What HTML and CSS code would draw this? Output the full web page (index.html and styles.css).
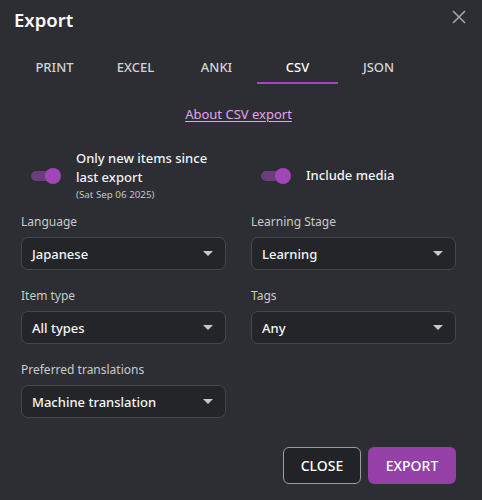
FILE: index.html
```html
<!DOCTYPE html>
<html>
<head>
<meta charset="utf-8">
<link rel="stylesheet" href="styles.css">
</head>
<body>
<div class="dialog">
  <div class="header">
    <h1 class="title">Export</h1>
    <button class="close-x" aria-label="Close">
      <svg width="14" height="14" viewBox="0 0 14 14"><path d="M1 1L13 13M13 1L1 13" stroke="#a3a4a7" stroke-width="1.6" fill="none"/></svg>
    </button>
  </div>
  <div class="tabs">
    <div class="tab">PRINT</div>
    <div class="tab">EXCEL</div>
    <div class="tab">ANKI</div>
    <div class="tab active">CSV</div>
    <div class="tab">JSON</div>
  </div>
  <div class="content">
    <div class="link-row"><a class="link" href="#">About CSV export</a></div>
    <div class="toggles">
      <div class="toggle-item">
        <span class="switch"><span class="track"></span><span class="knob"></span></span>
        <div class="toggle-label">
          <div class="toggle-text">Only new items since<br>last export</div>
          <div class="toggle-sub">(Sat Sep 06 2025)</div>
        </div>
      </div>
      <div class="toggle-item">
        <span class="switch"><span class="track"></span><span class="knob"></span></span>
        <div class="toggle-label">
          <div class="toggle-text">Include media</div>
        </div>
      </div>
    </div>
    <div class="grid">
      <div class="field">
        <div class="label">Language</div>
        <div class="select"><span>Japanese</span><span class="arrow"></span></div>
      </div>
      <div class="field">
        <div class="label">Learning Stage</div>
        <div class="select"><span>Learning</span><span class="arrow"></span></div>
      </div>
      <div class="field">
        <div class="label">Item type</div>
        <div class="select"><span>All types</span><span class="arrow"></span></div>
      </div>
      <div class="field">
        <div class="label">Tags</div>
        <div class="select"><span>Any</span><span class="arrow"></span></div>
      </div>
      <div class="field">
        <div class="label">Preferred translations</div>
        <div class="select"><span>Machine translation</span><span class="arrow"></span></div>
      </div>
    </div>
    <div class="actions">
      <button class="btn btn-outline">CLOSE</button>
      <button class="btn btn-primary">EXPORT</button>
    </div>
  </div>
</div>
</body>
</html>
```

FILE: styles.css
```css
* { box-sizing: border-box; }
html, body {
  margin: 0;
  padding: 0;
  background: #2c2e33;
}
body {
  font-family: "Noto Sans", "Open Sans", sans-serif;
  color: #ececec;
  width: 482px;
  height: 500px;
  overflow: hidden;
}
.dialog {
  width: 482px;
  height: 500px;
  background: #2c2e33;
}
.header {
  display: flex;
  justify-content: space-between;
  align-items: flex-start;
  padding: 6px 16px 0 14px;
}
.title {
  margin: 0;
  font-size: 18.5px;
  line-height: 28px;
  font-weight: 600;
  color: #ffffff;
}
.close-x {
  background: none;
  border: none;
  padding: 0;
  margin-top: 4px;
  width: 14px;
  height: 14px;
  display: block;
}
.close-x svg { display: block; }
.tabs {
  display: flex;
  padding-left: 14px;
  margin-top: 14px;
}
.tab {
  width: 81px;
  height: 36px;
  display: flex;
  align-items: center;
  justify-content: center;
  font-size: 13px;
  font-weight: 500;
  color: #d2d3d6;
  border-bottom: 2px solid transparent;
  padding-top: 4px;
}
.tab.active {
  color: #ffffff;
  border-bottom-color: #a346b8;
}
.content {
  padding: 0 26px 0 21px;
}
.link-row {
  text-align: center;
  margin-top: 19px;
  line-height: 20px;
}
.link {
  font-size: 13px;
  color: #e4a3f2;
  text-decoration: underline;
  text-underline-offset: 2px;
}
.toggles {
  display: grid;
  grid-template-columns: 230px 1fr;
  margin-top: 25px;
}
.toggle-item {
  display: flex;
  align-items: center;
  padding-left: 10px;
}
.switch {
  position: relative;
  width: 30px;
  height: 16px;
  flex: none;
  margin-right: 15px;
}
.track {
  position: absolute;
  left: 0;
  top: 3px;
  width: 26px;
  height: 10px;
  border-radius: 5px;
  background: #6b3d7a;
}
.knob {
  position: absolute;
  right: 0;
  top: 0;
  width: 16px;
  height: 16px;
  border-radius: 50%;
  background: #a146b6;
}
.toggle-text {
  font-size: 13px;
  line-height: 19px;
  font-weight: 500;
  color: #f2f2f2;
}
.toggle-sub {
  font-size: 9.8px;
  line-height: 14px;
  color: #c4c5c8;
  margin-top: 1px;
}
.grid {
  display: grid;
  grid-template-columns: 205px 205px;
  column-gap: 25px;
  row-gap: 17px;
  margin-top: 11px;
}
.label {
  font-size: 12px;
  line-height: 18px;
  color: #c9cacd;
  margin-bottom: 6px;
}
.select {
  height: 33px;
  border: 1px solid #45474d;
  border-radius: 7px;
  background: #242529;
  display: flex;
  align-items: center;
  justify-content: space-between;
  padding: 0 12px 0 10px;
  font-size: 13px;
  font-weight: 500;
  color: #f4f4f4;
}
.arrow {
  width: 0;
  height: 0;
  border-left: 5px solid transparent;
  border-right: 5px solid transparent;
  border-top: 5px solid #c8c9cc;
}
.actions {
  display: flex;
  justify-content: flex-end;
  gap: 7px;
  margin-top: 29px;
}
.btn {
  height: 37px;
  border-radius: 6px;
  font-family: "Noto Sans", "Open Sans", sans-serif;
  font-size: 14px;
  font-weight: 500;
  padding: 0;
}
.btn-outline {
  width: 78px;
  background: #222327;
  border: 1px solid #9b9ca0;
  color: #ffffff;
}
.btn-primary {
  width: 88px;
  background: #9440a6;
  border: none;
  color: #ffffff;
}
```
